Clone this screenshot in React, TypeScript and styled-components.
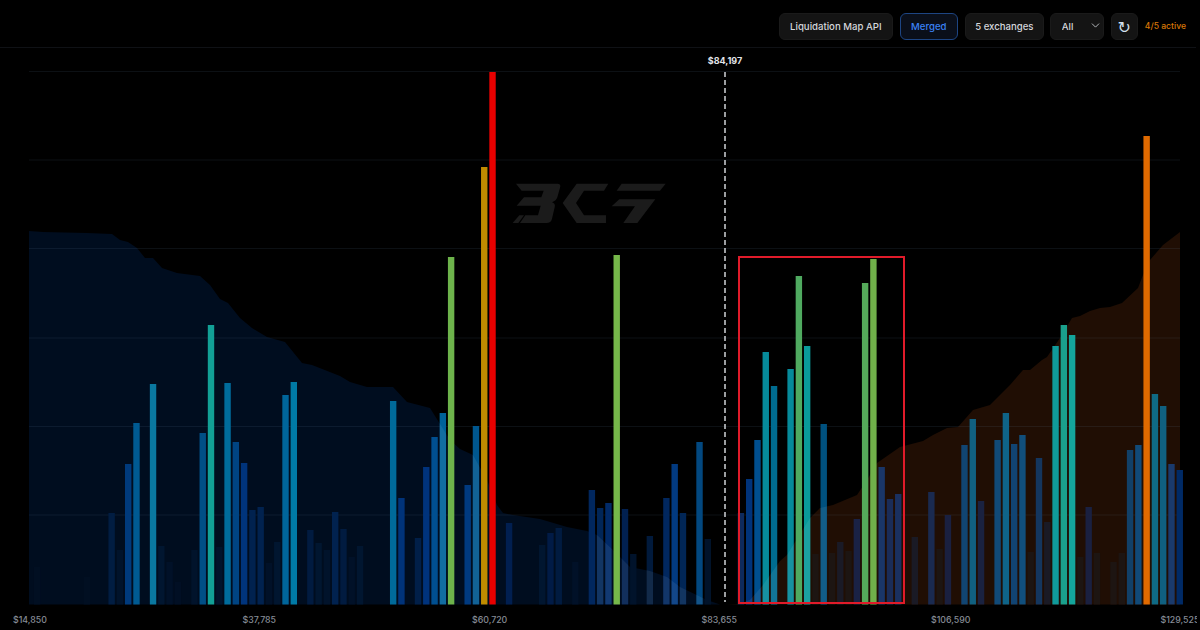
import styled, { createGlobalStyle } from "styled-components";
import { ChevronDown } from "lucide-react";

const BASE = 604.5;
const BAR_W = 6.4;
const barX = (i: number) => 0.8 + i * 8.28;

// [bin, top y, colour]
const bars: [number, number, string][] = [
  [4, 567, "#010f22"], [10, 577, "#010f22"], [13, 513, "#011d42"], [14, 550, "#01132b"], [15, 464, "#003a7c"], [16, 423, "#005a92"],
  [18, 384, "#0a78a0"], [19, 546, "#011630"], [20, 562, "#011128"], [21, 582, "#010f24"], [23, 550, "#01132b"],
  [24, 433, "#004f86"], [25, 325, "#12a096"], [26, 547, "#01132b"], [27, 383, "#006c9c"], [28, 442, "#004482"],
  [29, 463, "#00347c"], [30, 510, "#01224f"], [31, 507, "#01224f"], [32, 563, "#011128"], [33, 542, "#011630"],
  [34, 395, "#00659a"], [35, 382, "#007aa6"], [37, 530, "#011b40"], [38, 543, "#011630"], [39, 550, "#01132b"],
  [40, 512, "#01224f"], [41, 529, "#011b40"], [42, 557, "#011128"], [43, 546, "#011630"], [47, 401, "#006a9a"],
  [48, 498, "#00337a"], [50, 538, "#011f48"], [51, 467, "#00337c"], [52, 437, "#004f90"], [53, 413, "#00629a"],
  [54, 257, "#6db34b"], [56, 485, "#003a80"], [57, 426, "#00578f"], [58, 167, "#c08c00"], [59, 72, "#e80000"],
  [61, 523, "#011f50"], [65, 545, "#011630"], [66, 533, "#011b46"], [67, 528, "#011b40"], [69, 562, "#011128"],
  [71, 490, "#01275e"], [72, 508, "#012658"], [73, 503, "#012a68"], [74, 255, "#76b84a"], [75, 509, "#012050"],
  [76, 554, "#01132b"], [78, 536, "#011a3c"], [80, 498, "#01275e"], [81, 464, "#023a80"], [82, 513, "#012656"],
  [84, 442, "#024880"], [85, 539, "#01132a"], [89, 513, "#0e2a5c"], [90, 479, "#00337a"], [91, 440, "#004f8f"],
  [92, 352, "#068a9a"], [93, 386, "#006c90"], [95, 369, "#068a9a"], [96, 276, "#4faa60"], [97, 346, "#0a9a9a"],
  [98, 554, "#1d1512"], [99, 424, "#00517f"], [100, 553, "#1d1512"], [101, 542, "#1a1a26"], [102, 551, "#1d1512"],
  [103, 519, "#1a2245"], [104, 283, "#55aa5a"], [105, 259, "#70b04a"], [106, 467, "#1a3668"], [107, 499, "#1a2c58"],
  [108, 494, "#1a3060"], [110, 537, "#1a1a25"], [112, 492, "#1a2a50"], [113, 549, "#1d1512"], [114, 515, "#1a2040"],
  [116, 445, "#114572"], [117, 419, "#116080"], [118, 501, "#1a2240"], [120, 440, "#114a78"], [121, 413, "#0f6488"],
  [122, 444, "#114472"], [123, 435, "#114f7c"], [124, 552, "#1d1512"], [125, 458, "#14365e"], [126, 522, "#1a1a25"],
  [127, 346, "#109a9a"], [128, 325, "#1aa08c"], [129, 335, "#14a59b"], [130, 557, "#1d1512"], [131, 507, "#1a2040"],
  [132, 553, "#1d1512"], [134, 562, "#1d1512"], [135, 553, "#1d1512"], [136, 450, "#114068"], [137, 445, "#114a78"],
  [138, 136, "#e06a00"], [139, 394, "#0f6a85"], [140, 406, "#106080"], [141, 464, "#1a3a6c"], [142, 470, "#002a66"],
];

// bars that stick out of the area and get lighter where they cross it
const crossing = [53, 57, 72, 73, 75, 78, 80, 81, 82, 84, 90, 91, 92, 93, 95, 97, 99];

const shortArea = "29,604.5 29,231 43,232 87,233 112,234 120,240 128,242 137,248 145,258 153,258 162,268 177,273 200,276 210,285 220,299 228,303 240,318 252,328 267,337 285,342 302,363 312,365 340,376 350,382 367,387 393,387 407,402 430,408 450,440 460,449 473,455 487,480 497,505 503,513 513,515 540,519 567,527 587,531 597,535 613,550 630,567 650,571 667,577 680,587 707,600 720,604.5";
const longArea = "727,604.5 738,604 750,600 763,585 780,561 787,555 810,518 820,508 833,505 857,495 867,480 877,463 900,447 923,441 933,435 947,428 958,427 973,410 990,405 1010,385 1023,370 1030,370 1042,360 1047,357 1060,338 1072,318 1080,316 1090,311 1100,308 1110,307 1122,303 1138,288 1143,275 1150,260 1163,245 1180,232 1180,604.5";

const gridLines = [71.5, 160, 248.5, 338, 426.5, 515];
const ticks = ["$14,850", "$37,785", "$60,720", "$83,655", "$106,590", "$129,525"];

const GlobalStyle = createGlobalStyle`
  html, body {
    margin: 0;
    background: #000;
  }
`;

const Page = styled.div`
  width: 1200px;
  height: 630px;
  background: #000;
  overflow: hidden;
  font-family: Inter, "Liberation Sans", sans-serif;
`;

const Toolbar = styled.div`
  display: flex;
  align-items: center;
  justify-content: flex-end;
  gap: 7px;
  box-sizing: border-box;
  height: 48px;
  margin-right: 4px;
  padding: 5px 10px 0 0;
  border-bottom: 1px solid #0f1115;
`;

const Button = styled.button<{ $active?: boolean; $width: number }>`
  box-sizing: border-box;
  width: ${(p) => p.$width}px;
  height: 27px;
  padding: 0;
  border-radius: 6px;
  border: 1px solid ${(p) => (p.$active ? "#1d4583" : "#1a1a1a")};
  background: ${(p) => (p.$active ? "#0a0f1a" : "#141414")};
  color: ${(p) => (p.$active ? "#3b82f6" : "#d4d7dc")};
  font: 500 9.6px Inter, "Liberation Sans", sans-serif;
`;

const SelectWrap = styled.div`
  position: relative;
  width: 54px;
  height: 27px;
  margin-left: -1px;
  color: #d4d7dc;

  svg {
    position: absolute;
    top: 6px;
    right: 2px;
    pointer-events: none;
  }
`;

const Select = styled.select`
  appearance: none;
  box-sizing: border-box;
  width: 100%;
  height: 100%;
  padding: 0 0 0 11px;
  border-radius: 6px;
  border: 1px solid #1a1a1a;
  background: #141414;
  color: #d4d7dc;
  font: 500 9.6px Inter, "Liberation Sans", sans-serif;
`;

const RefreshButton = styled.button`
  box-sizing: border-box;
  width: 27px;
  height: 27px;
  padding: 3px 0 0;
  border-radius: 6px;
  border: 1px solid #1a1a1a;
  background: #141414;
  color: #d3e0ee;
  font: 16px "DejaVu Sans", sans-serif;
`;

const ActiveCount = styled.span`
  color: #d97706;
  font-size: 8.6px;
  font-weight: 500;
`;

const ChartArea = styled.div`
  position: relative;
  height: 557px;
`;

const ChartSvg = styled.svg`
  display: block;
`;

const PriceTag = styled.span`
  position: absolute;
  left: 725px;
  top: 7px;
  transform: translateX(-50%);
  color: #e2e4e8;
  font-size: 9px;
  font-weight: 700;
`;

const Highlight = styled.div`
  position: absolute;
  left: 738px;
  top: 208px;
  width: 167px;
  height: 348px;
  box-sizing: border-box;
  border: 2px solid #e01b2a;
`;

const Axis = styled.div`
  display: grid;
  grid-template-columns: repeat(6, 229.5px);
  margin-right: 3px;
  padding: 9px 0 0 13px;
  overflow: hidden;
`;

const Tick = styled.span`
  color: #868c96;
  font-size: 8.8px;
  font-weight: 500;
  white-space: nowrap;
`;

function Logo() {
  return (
    <g transform="translate(500 178) scale(0.3333)" fill="#1b1b1b">
      <path d="M48 17H172Q184 17 180 29L172 58Q169 68 156 73Q167 76 164 88L156 122Q153 135 139 135H60L76 112H114L122 83H50L72 58H124L131 38H65Z" />
      <path d="M38 135L58 112H72L55 135Z" />
      <path d="M188 75L230 17H325L312 38H252L228 75L252 112H318V135H230Z" />
      <path d="M365 17H497L480 38H350Z" />
      <path d="M358 64H466L412 135H370L405 85H335Z" />
    </g>
  );
}

export default function App() {
  return (
    <Page>
      <GlobalStyle />
      <Toolbar>
        <Button $width={114}>Liquidation Map API</Button>
        <Button $active $width={58}>Merged</Button>
        <Button $width={79}>5 exchanges</Button>
        <SelectWrap>
          <Select defaultValue="all">
            <option value="all">All</option>
          </Select>
          <ChevronDown size={13} strokeWidth={1.5} />
        </SelectWrap>
        <RefreshButton>↻</RefreshButton>
        <ActiveCount>4/5 active</ActiveCount>
      </Toolbar>
      <ChartArea>
        <ChartSvg width="1200" height="557" viewBox="0 48 1200 557">
          <defs>
            <clipPath id="areas">
              <polygon points={shortArea} />
              <polygon points={longArea} />
            </clipPath>
          </defs>
          <polygon points={shortArea} fill="#000d1f" />
          <polygon points={longArea} fill="#200e04" />
          {gridLines.map((y) => (
            <line key={y} x1="29" x2="1180" y1={y} y2={y} stroke="#78a0c8" strokeOpacity="0.1" />
          ))}
          <Logo />
          {bars.map(([i, top, color]) => (
            <rect key={i} x={barX(i)} y={top} width={BAR_W} height={BASE - top} fill={color} />
          ))}
          <g clipPath="url(#areas)">
            {bars
              .filter(([i]) => crossing.includes(i))
              .map(([i, top]) => (
                <rect key={i} x={barX(i)} y={top} width={BAR_W} height={BASE - top} fill="#fff" fillOpacity="0.07" />
              ))}
          </g>
          <line x1="725" x2="725" y1="72" y2="602" stroke="#d0d2d6" strokeWidth="1.5" strokeDasharray="5 3" />
        </ChartSvg>
        <PriceTag>$84,197</PriceTag>
        <Highlight />
      </ChartArea>
      <Axis>
        {ticks.map((t) => (
          <Tick key={t}>{t}</Tick>
        ))}
      </Axis>
    </Page>
  );
}
